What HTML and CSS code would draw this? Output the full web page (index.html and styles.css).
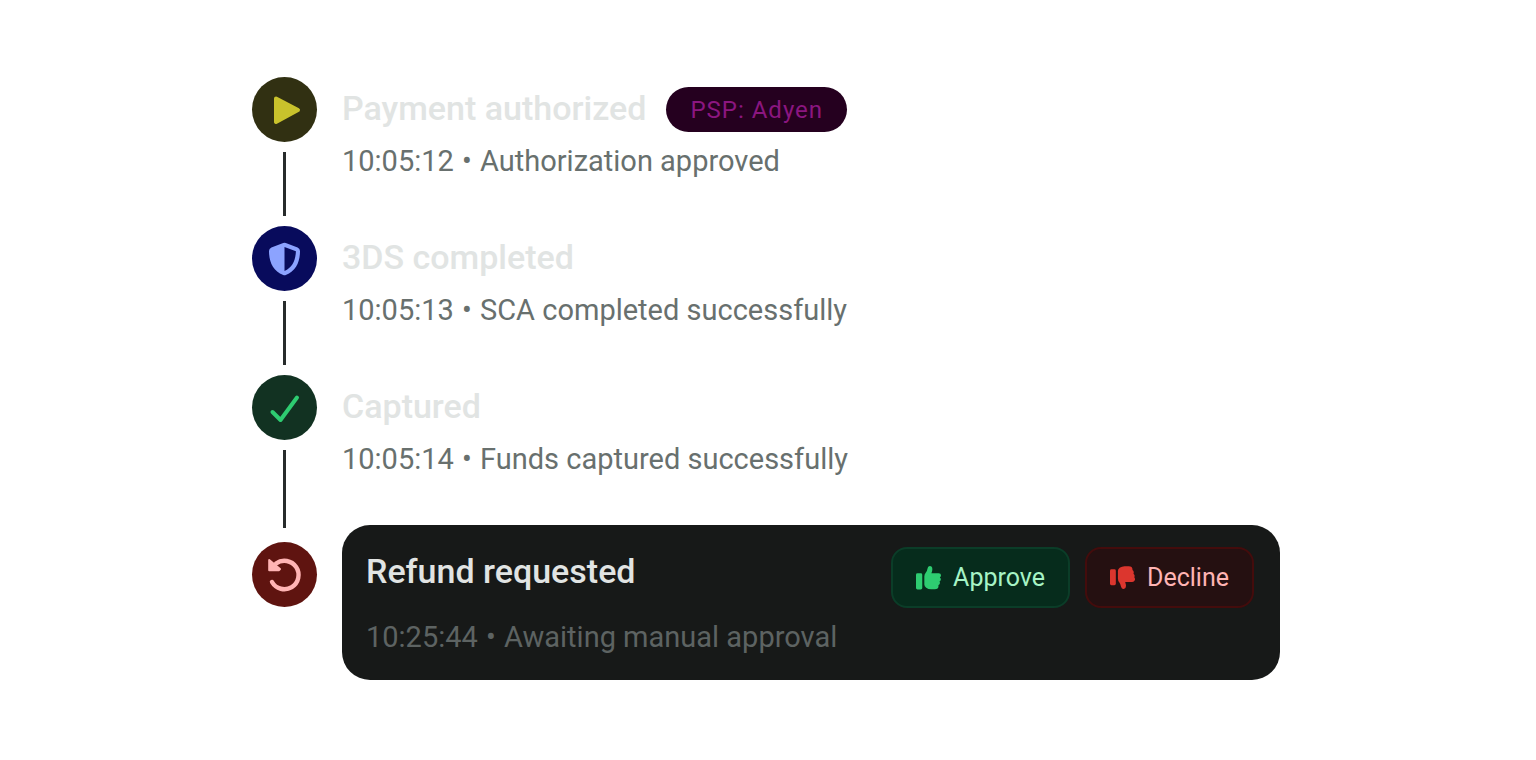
FILE: index.html
```html
<!DOCTYPE html>
<html lang="en">
<head>
  <meta charset="UTF-8">
  <meta name="viewport" content="width=device-width, initial-scale=1.0">
  <title>Payment timeline</title>
  <link rel="stylesheet" href="styles.css">
</head>
<body>

  <main class="timeline">
    <section class="event">
      <div class="rail">
        <div class="badge badge-authorized">
          <svg viewBox="0 0 65 65" aria-hidden="true">
            <path d="M24 21.5 L46 33 L24 45 Z" fill="#c9c22c" stroke="#c9c22c" stroke-width="4" stroke-linejoin="round"/>
          </svg>
        </div>
        <div class="line"></div>
      </div>
      <div class="content">
        <div class="heading">
          <h2>Payment authorized</h2>
          <span class="tag">PSP: Adyen</span>
        </div>
        <p>10:05:12 <span class="dot">•</span> Authorization approved</p>
      </div>
    </section>

    <section class="event">
      <div class="rail">
        <div class="badge badge-secure">
          <svg viewBox="0 0 65 65" aria-hidden="true">
            <path fill="#8ca3ff" fill-rule="evenodd" d="M31.2 17.1 Q32.5 16.6 33.8 17.1 L45.6 21.5 Q48 22.5 48 25 C48 36 44 45 33.8 49 Q32.5 49.5 31.2 49 C21 45 17 36 17 25 Q17 22.5 19.4 21.5 Z M32.5 21 V45 C40.5 41.5 43.5 34.5 43.9 25.3 Z"/>
          </svg>
        </div>
        <div class="line"></div>
      </div>
      <div class="content">
        <div class="heading">
          <h2>3DS completed</h2>
        </div>
        <p>10:05:13 <span class="dot">•</span> SCA completed successfully</p>
      </div>
    </section>

    <section class="event event-captured">
      <div class="rail">
        <div class="badge badge-captured">
          <svg viewBox="0 0 65 65" aria-hidden="true">
            <path d="M20.5 37 L28.5 45 L45 22.5" fill="none" stroke="#2ecc71" stroke-width="4" stroke-linecap="round" stroke-linejoin="round"/>
          </svg>
        </div>
        <div class="line"></div>
      </div>
      <div class="content">
        <div class="heading">
          <h2>Captured</h2>
        </div>
        <p>10:05:14 <span class="dot">•</span> Funds captured successfully</p>
      </div>
    </section>

    <section class="event event-refund">
      <div class="rail">
        <div class="badge badge-refund">
          <svg viewBox="0 0 65 65" aria-hidden="true">
            <path d="M24 21.5 A14.2 14.2 0 1 1 20 40" fill="none" stroke="#ffb4b4" stroke-width="4.4" stroke-linecap="round"/>
            <path d="M17.2 18 L28 27 L27 28.2 H17.2 Z" fill="#ffb4b4" stroke="#ffb4b4" stroke-width="2" stroke-linejoin="round"/>
          </svg>
        </div>
      </div>
      <div class="card">
        <div class="card-top">
          <h2>Refund requested</h2>
          <div class="actions">
            <button type="button" class="approve">
              <svg viewBox="0 0 24 24" aria-hidden="true">
                <rect x="0" y="8" width="6" height="15.5" rx="1.4"/>
                <path d="M8 11 Q8 8.8 9.3 7.4 Q10.7 5.8 11 3.5 Q11.3 1 13.2 1 Q15.7 1 15.7 4 Q15.7 6 14.8 7.8 H21.8 Q24 7.8 24 9.8 Q24 11.3 22.9 12 Q24.2 12.8 23.7 14.4 Q23.4 15.4 22.5 15.8 Q23.4 17 22.7 18.2 Q22.2 19 21.5 19.3 Q22.2 23.3 18 23.3 H14.5 Q11.8 23.3 9.8 21.8 Q8 20.5 8 18.6 Z"/>
              </svg>
              Approve
            </button>
            <button type="button" class="decline">
              <svg viewBox="0 0 24 24" aria-hidden="true">
                <rect x="0" y="4" width="5.6" height="15.4" rx="1.4"/>
                <path d="M7.6 5.8 Q7.6 3.8 9.3 2.6 Q11.4 1.1 14 1.1 H18 Q21.8 1.1 21.6 4.8 Q22.9 5.5 22.8 7.1 Q22.8 7.8 22.5 8.3 Q24.3 9.6 23.3 11.8 Q24.4 13.2 23.8 14.7 Q23.2 16.4 21.3 16.4 H14.6 Q14.8 17.4 15.2 18.7 Q15.9 22.8 13.2 23.1 Q11.3 23.3 10.6 20.8 Q10 18 9 16.8 Q7.6 15.3 7.6 13 Z"/>
              </svg>
              Decline
            </button>
          </div>
        </div>
        <p>10:25:44 <span class="dot">•</span> Awaiting manual approval</p>
      </div>
    </section>
  </main>

</body>
</html>
```
FILE: styles.css
```css
body {
  margin: 0;
  background-color: #ffffff;
  font-family: Roboto, Arial, sans-serif;
}
.timeline {
  padding: 77px 256px 80px 252px;
}
.event {
  display: flex;
  gap: 25px;
  min-height: 149px;
}
.rail {
  display: flex;
  flex-direction: column;
  align-items: center;
  flex-shrink: 0;
}
.badge {
  width: 65px;
  height: 65px;
  border-radius: 50%;
}
.badge svg {
  display: block;
}
.badge-authorized {
  background-color: #313012;
}
.badge-secure {
  background-color: #080b5c;
}
.badge-captured {
  background-color: #123222;
}
.badge-refund {
  background-color: #5f1410;
}
.line {
  flex: 1;
  width: 3px;
  margin: 10px 0;
  background-color: #272b2b;
}
.event-captured .line {
  margin-bottom: -4px;
}
.content {
  flex: 1;
}
.heading {
  display: flex;
  align-items: center;
  gap: 20px;
  height: 64px;
}
h2 {
  margin: 0;
  padding-bottom: 2px;
  font-size: 34px;
  font-weight: 500;
  line-height: 40px;
  color: #e1e4e3;
}
p {
  margin: 0;
  font-size: 29px;
  line-height: 40px;
  color: #68706e;
}
.dot {
  margin: 0 1px;
}
.tag {
  padding: 1px 24px 0;
  border-radius: 23px;
  background-color: #25001f;
  color: #8b1680;
  font-size: 24px;
  line-height: 44px;
  letter-spacing: 1px;
}
.event-refund {
  margin-top: 1px;
}
.event-refund .rail {
  padding-top: 17px;
}
.card {
  flex: 1;
  padding: 22px 26px 23px 24px;
  border-radius: 28px;
  background-color: #171918;
}
.card-top {
  display: flex;
  justify-content: space-between;
  margin-bottom: 9px;
}
.card h2 {
  padding-top: 4px;
}
.card p {
  color: #5d6362;
}
.actions {
  display: flex;
  gap: 15px;
}
button {
  display: flex;
  align-items: center;
  gap: 12px;
  height: 61px;
  padding: 0 23px;
  border: 2px solid;
  border-radius: 16px;
  font-family: inherit;
  font-size: 25px;
  cursor: pointer;
}
button svg {
  width: 25px;
  height: 25px;
}
.approve {
  background-color: #062c1c;
  border-color: #0b3d28;
  color: #a6f4c5;
}
.approve svg {
  fill: #2ecc71;
}
.decline {
  background-color: #251011;
  border-color: #440c0c;
  color: #ffb4b4;
}
.decline svg {
  fill: #dc362e;
}
```
